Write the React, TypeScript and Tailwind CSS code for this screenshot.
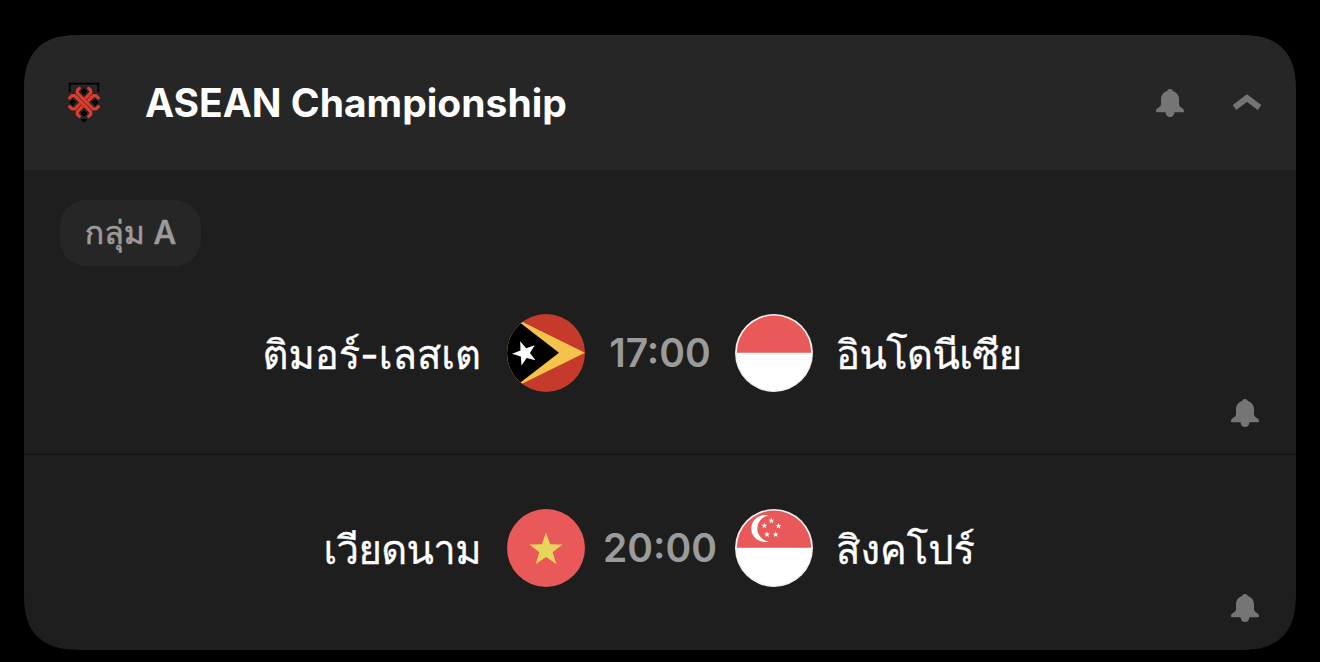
import type { ReactNode } from "react";
import clsx from "clsx";

type Team = {
  name: string;
  flag: ReactNode;
  tight?: boolean;
};

type Match = {
  id: number;
  home: Team;
  away: Team;
  time: string;
};

// points for a five pointed star, rotation in degrees (0 = tip up)
function starPoints(cx: number, cy: number, r: number, rotation = 0) {
  const pts: string[] = [];
  for (let i = 0; i < 10; i++) {
    const radius = i % 2 === 0 ? r : r * 0.4;
    const a = ((i * 36 - 90 + rotation) * Math.PI) / 180;
    pts.push(`${(cx + radius * Math.cos(a)).toFixed(2)},${(cy + radius * Math.sin(a)).toFixed(2)}`);
  }
  return pts.join(" ");
}

function TimorFlag() {
  return (
    <svg viewBox="0 0 78 78" className="size-[78px] rounded-full">
      <rect width="78" height="78" fill="#c63a2b" />
      <polygon points="-1,0 13.5,7 78,38.8 13.5,70.6 -1,78" fill="#f5c34b" />
      <polygon points="-4,-4 13.5,9 52,38.8 13.5,68.6 -4,82" fill="#000" />
      <polygon points={starPoints(17.8, 39.2, 12.8, -93)} fill="#fff" />
    </svg>
  );
}

function IndonesiaFlag() {
  return (
    <svg viewBox="0 0 78 78" className="size-[78px]">
      <circle cx="39" cy="39" r="39" fill="#f0efef" />
      <circle cx="39" cy="39" r="37.6" fill="#fff" />
      <path d="M1.800 38.800a37.200 37.200 0 0 1 74.400 0z" fill="#e95959" />
    </svg>
  );
}

function VietnamFlag() {
  return (
    <svg viewBox="0 0 78 78" className="size-[78px]">
      <circle cx="39" cy="39" r="39" fill="#e95959" />
      <polygon points={starPoints(39, 41, 17.4)} fill="#e8d65b" />
    </svg>
  );
}

function SingaporeFlag() {
  const stars = [
    [36.3, 11.7],
    [29.3, 16.8],
    [43.4, 16.9],
    [32, 25.4],
    [40.7, 25.4],
  ];
  return (
    <svg viewBox="0 0 78 78" className="size-[78px]">
      <circle cx="39" cy="39" r="39" fill="#f0efef" />
      <circle cx="39" cy="39" r="37.6" fill="#fff" />
      <path d="M1.800 38.800a37.200 37.200 0 0 1 74.400 0z" fill="#e95959" />
      <path d="M33.700 6.600a13.500 13.500 0 1 0 0 25.800a13 13 0 0 1 0-25.800z" fill="#fff" />
      {stars.map(([x, y]) => (
        <polygon key={`${x}-${y}`} points={starPoints(x, y, 3.1)} fill="#fff" />
      ))}
    </svg>
  );
}

function Bell() {
  return (
    <svg viewBox="0 0 28 28" className="block size-7" fill="#757575">
      <path d="M14 0c-1.600 0-2.600.9-2.800 2.100C7.400 3.200 5 6.400 5 10.300v4.200c0 2-.7 3.100-2.200 4.100C1 19.700 0 20.600 0 22v.4c0 .5.400.8.900.8h8.600C9.700 25.900 11.500 28 14 28s4.300-2.100 4.500-4.800h8.600c.5 0 .9-.3.9-.8V22c0-1.400-1-2.300-2.800-3.400c-1.500-1-2.200-2.100-2.200-4.100v-4.200c0-3.900-2.400-7.100-6.200-8.200C16.600.9 15.600 0 14 0z" />
    </svg>
  );
}

function LeagueLogo() {
  // one knot strand, mirrored and rotated around the centre
  const strand = "M-14-42L-20-36V-28L28 20H36L43 13";
  return (
    <svg viewBox="-48 -61 96 126" className="h-[42px] w-8" fill="none">
      <path d="M-43-30v-26h86v26" stroke="#000" strokeWidth="5" />
      <path d="M-9 50h18v3l-9 8-9-8z" fill="#000" />
      <g fill="#000">
        <path d="M0-43l10 10-10 10-10-10z" />
        <path d="M-34-10l10 10-10 10-10-10z" />
        <path d="M34-10l10 10-10 10-10-10z" />
        <path d="M0 23l10 10-10 10-10-10z" />
      </g>
      <g stroke="#e03c2e" strokeWidth="9.500" strokeLinecap="round" strokeLinejoin="round">
        <g transform="scale(-1 1)">
          <path d={strand} />
          <path d={strand} transform="rotate(180)" />
        </g>
        <path d="M-12-12L12 12" stroke="#5a221d" strokeWidth="22" strokeLinecap="butt" />
        <path d={strand} />
        <path d={strand} transform="rotate(180)" />
      </g>
    </svg>
  );
}

const matches: Match[] = [
  {
    id: 1,
    home: { name: "ติมอร์-เลสเต", flag: <TimorFlag /> },
    away: { name: "อินโดนีเซีย", flag: <IndonesiaFlag />, tight: true },
    time: "17:00",
  },
  {
    id: 2,
    home: { name: "เวียดนาม", flag: <VietnamFlag />, tight: true },
    away: { name: "สิงคโปร์", flag: <SingaporeFlag /> },
    time: "20:00",
  },
];

function TeamName({ team, className }: { team: Team; className: string }) {
  return (
    <span
      className={clsx(
        "pt-[3px] text-[40px] leading-[70px] whitespace-nowrap text-white [-webkit-text-stroke:0.3px_#fff]",
        team.tight && "tracking-[-0.6px]",
        className
      )}
    >
      {team.name}
    </span>
  );
}

function MatchRow({ match }: { match: Match }) {
  return (
    <div className="relative grid h-[78px] grid-cols-[1fr_78px_150px_78px_1fr] items-center">
      <TeamName team={match.home} className="pr-[26px] text-right" />
      {match.home.flag}
      <span className="pt-px text-center text-[39px] font-semibold text-[#9b9b9b]">{match.time}</span>
      {match.away.flag}
      <TeamName team={match.away} className="pl-[23px]" />
      <button type="button" aria-label="Notify" className="absolute top-[85px] right-[37px]">
        <Bell />
      </button>
    </div>
  );
}

export default function App() {
  return (
    <main className="h-[662px] overflow-hidden bg-black px-6 pt-[35px] font-['Inter','Loma','Noto_Sans',sans-serif]">
      <section className="h-[615px] overflow-hidden rounded-[58px] bg-[#1e1e1e] [corner-shape:superellipse(1.4)]">
        <header className="flex h-[135px] items-center bg-[#262626] pr-[34px] pl-11">
          <LeagueLogo />
          <h1 className="ml-[45px] flex-1 pt-px text-[39px] font-bold text-white">ASEAN Championship</h1>
          <Bell />
          <svg viewBox="0 0 30 18" className="ml-[48px] h-[18px] w-[30px]" fill="none">
            <path d="M2.500 13.500L15 4.100L27.500 13.500" stroke="#757575" strokeWidth="6" />
          </svg>
        </header>

        <div className="h-[283px] pt-[30px]">
          <div className="ml-9 flex h-[66px] w-[141px] items-center justify-center rounded-[26px] bg-[#262626] text-[32px] font-medium whitespace-nowrap text-[#9b9b9b] [-webkit-text-stroke:0.6px_#9b9b9b]">
            กลุ่ม A
          </div>
          <div className="mt-12">
            <MatchRow match={matches[0]} />
          </div>
        </div>
        <div className="border-t-2 border-[#161616] pt-[54px]">
          <MatchRow match={matches[1]} />
        </div>
      </section>
    </main>
  );
}
